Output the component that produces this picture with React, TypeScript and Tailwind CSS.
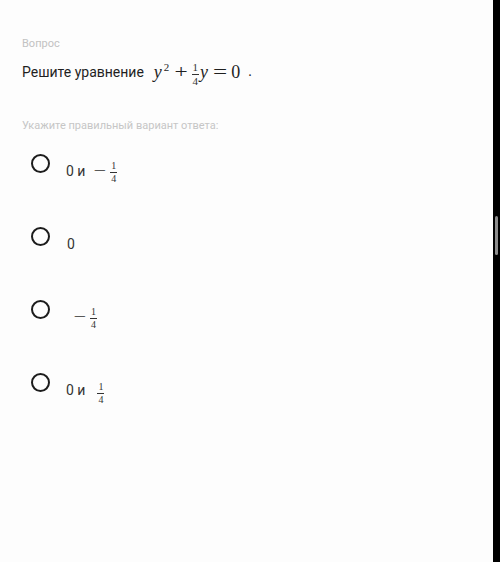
import React from 'react';

// Stacked fraction, drawn the way a math renderer would.
function Frac({ num, den, size = 'text-[10px]' }: { num: string; den: string; size?: string }) {
  return (
    <span className={`inline-flex flex-col items-center leading-none text-[#333] ${size}`}>
      <span className="px-[1px] pb-[1px]">{num}</span>
      <span className="h-px w-full bg-[#333]" />
      <span className="px-[1px] pt-[1px]">{den}</span>
    </span>
  );
}

const mathFont = { fontFamily: '"Liberation Serif", "DejaVu Serif", serif' };

function Radio() {
  return <div className="h-[19px] w-[19px] shrink-0 rounded-full border-[2.5px] border-[#1c1c1c]" />;
}

function Minus() {
  return <span className="inline-block scale-x-[1.6] text-[14px] leading-none">−</span>;
}

const options = [
  {
    id: 'a',
    content: (
      <>
        <span>0 и</span>
        <span className="ml-[11px] flex items-center text-[#333]" style={mathFont}>
          <Minus />
          <span className="ml-[6px]">
            <Frac num="1" den="4" />
          </span>
        </span>
      </>
    ),
  },
  { id: 'b', content: <span className="ml-[1px]">0</span> },
  {
    id: 'c',
    content: (
      <span className="ml-[10px] flex items-center text-[#333]" style={mathFont}>
        <Minus />
        <span className="ml-[6px]">
          <Frac num="1" den="4" />
        </span>
      </span>
    ),
  },
  {
    id: 'd',
    content: (
      <>
        <span>0 и</span>
        <span className="ml-[12px] mt-[3px]" style={mathFont}>
          <Frac num="1" den="4" />
        </span>
      </>
    ),
  },
];

export default function App() {
  return (
    <div className="flex h-[562px] w-[500px] bg-[#fdfdfd]" style={{ fontFamily: 'Roboto, "Liberation Sans", sans-serif' }}>
      <div className="flex-1 pl-[22px] pt-[38px]">
        <div className="text-[11px] leading-none text-[#c2c2c2]">Вопрос</div>

        <div className="mt-[12px] flex h-[22px] items-center text-[#1f1f1f]">
          <span className="text-[14px] leading-none">Решите уравнение</span>
          <span className="ml-[10px] flex items-center text-[18px] leading-none" style={mathFont}>
            <span className="italic">y</span>
            <span className="-mt-[10px] ml-[2px] text-[11px]">2</span>
            <span className="ml-[7px] inline-block scale-x-[1.3]">+</span>
            <span className="ml-[5px] -mt-px">
              <Frac num="1" den="4" size="text-[11px]" />
            </span>
            <span className="ml-[1px] italic">y</span>
            <span className="ml-[7px] inline-block scale-x-[1.4]">=</span>
            <span className="ml-[6px]">0</span>
            <span className="ml-[8px] text-[14px]">.</span>
          </span>
        </div>

        <div className="mt-[37px] text-[11px] leading-none text-[#c6c6c6]">Укажите правильный вариант ответа:</div>

        <div className="mt-[23px] pl-[9px]">
          {options.map((o) => (
            <div key={o.id} className="flex h-[73px] items-start">
              <Radio />
              <div className="ml-[16px] mt-[7px] flex h-[20px] items-center text-[14px] leading-none text-[#333]">
                {o.content}
              </div>
            </div>
          ))}
        </div>
      </div>

      {/* dark edge with the scroll thumb */}
      <div className="w-[7px] shrink-0 bg-black pt-[216px]">
        <div className="ml-[2px] h-[39px] w-[3px] rounded-sm bg-[#8c8c8c]" />
      </div>
    </div>
  );
}
